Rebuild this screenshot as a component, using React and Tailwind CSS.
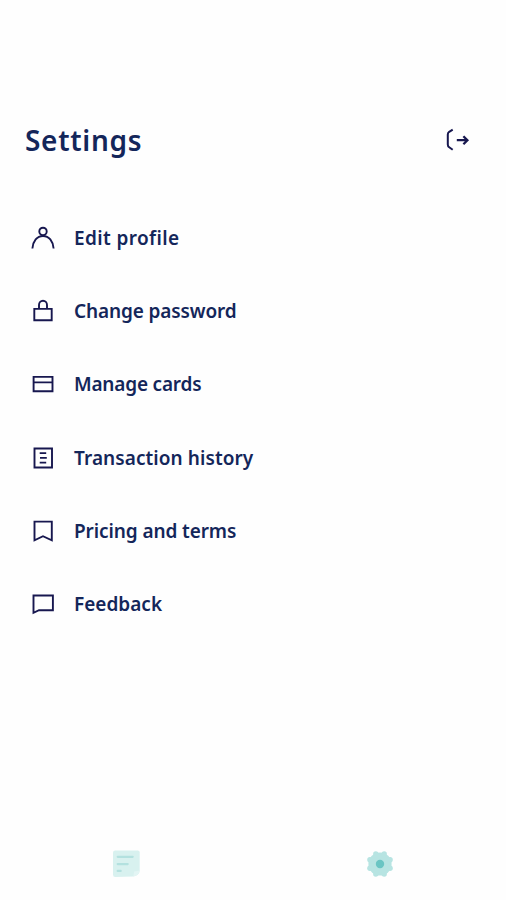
const ink = "#17174f";

function Icon({ children }) {
  return (
    <svg className="size-7 shrink-0" viewBox="0 0 28 28" fill="none" stroke={ink} strokeWidth="1.9">
      {children}
    </svg>
  );
}

const items = [
  {
    label: "Edit profile",
    tracking: "tracking-[0.37px]",
    icon: (
      <>
        <circle cx="14" cy="7.4" r="3.7" />
        <path d="M3.400 24.500C4 17 8 12 14 12S24 17 24.600 24.500" />
      </>
    ),
  },
  {
    label: "Change password",
    tracking: "tracking-[-0.13px]",
    icon: (
      <>
        <path d="M5.300 11.900H22.700V23.200H5.300Z" />
        <path d="M10 12V8a4 4.200 0 0 1 8 0V12" />
      </>
    ),
  },
  {
    label: "Manage cards",
    tracking: "tracking-[-0.2px]",
    icon: <path d="M4.600 6.900H23.500V21.300H4.600ZM4.600 12.400H23.500" />,
  },
  {
    label: "Transaction history",
    tracking: "tracking-[0.08px]",
    icon: (
      <>
        <path d="M5.500 4.500H23V23.500H5.500Z" />
        <path d="M10.700 9.200H17.200M11 13.900H17.800M10.700 18.600H17.200" strokeWidth="1.800" />
      </>
    ),
  },
  {
    label: "Pricing and terms",
    tracking: "tracking-[-0.1px]",
    icon: <path d="M5.500 4.600H22.800V23.300L14 19.200L5.500 23.300Z" />,
  },
  {
    label: "Feedback",
    tracking: "tracking-[0px]",
    icon: <path d="M4.500 5.500H23.900V20.200H10L4.500 22.800Z" />,
  },
];

export default function App() {
  return (
    <div className="flex h-[900px] w-[506px] flex-col bg-[#fefefe] font-['Noto_Sans',sans-serif] text-[#14265a]">
      <header className="mt-[115px] flex h-[50px] items-center justify-between pr-[34px] pl-[25px]">
        <h1 className="text-[28px] leading-[50px] font-semibold tracking-[0.7px]">Settings</h1>
        <svg className="h-7 w-7" viewBox="0 0 28 28" fill="none" stroke={ink} strokeWidth="2">
          <path d="M8.700 3.600L5.200 5.800Q3.800 6.800 3.800 8.500V18.500Q3.800 20.300 5.200 21.300L8.700 23.800" />
          <path d="M12.800 14.200H23.500M19.400 10.200L23.400 14.200L19.400 18.200" strokeWidth="2.300" />
        </svg>
      </header>

      <ul className="mt-[36px] flex h-[440px] flex-col pl-[29px]">
        {items.map(({ label, icon, tracking }) => (
          <li key={label} className="flex flex-1 items-center gap-[17px]">
            <Icon>{icon}</Icon>
            <span className={`text-[19px] leading-6 font-semibold whitespace-nowrap ${tracking}`}>{label}</span>
          </li>
        ))}
      </ul>

      <nav className="mt-auto mb-[22px] grid h-7 grid-cols-2 place-items-center">
        <svg className="size-7" viewBox="0.8 0.4 28 28">
          <path d="M3 1H25.500Q27.500 1 27.500 3V21Q27 26 21 27L3 27.500Q.8 27.500.8 25V3Q.8 1 3 1Z" fill="#d8f1ef" />
          <path d="M21 27L22 22L27.500 21Q27 26 21 27Z" fill="#e3f5f4" />
          <path d="M5.500 7.200H20.500M5.500 14.500H15.500M5.500 21.300H8.500" stroke="#b3e1df" strokeWidth="2.200" strokeLinecap="round" />
        </svg>
        <svg className="size-7" viewBox="0 0 28 28" fill="#b7e4e2">
          <circle cx="14" cy="14" r="11.600" />
          <circle cx="18.200" cy="3.900" r="2.700" />
          <circle cx="24.100" cy="9.800" r="2.700" />
          <circle cx="24.100" cy="18.200" r="2.700" />
          <circle cx="18.200" cy="24.100" r="2.700" />
          <circle cx="9.800" cy="24.100" r="2.700" />
          <circle cx="3.900" cy="18.200" r="2.700" />
          <circle cx="3.900" cy="9.800" r="2.700" />
          <circle cx="9.800" cy="3.900" r="2.700" />
          <circle cx="14" cy="14" r="4.200" fill="#6ac5c3" />
        </svg>
      </nav>
    </div>
  );
}
